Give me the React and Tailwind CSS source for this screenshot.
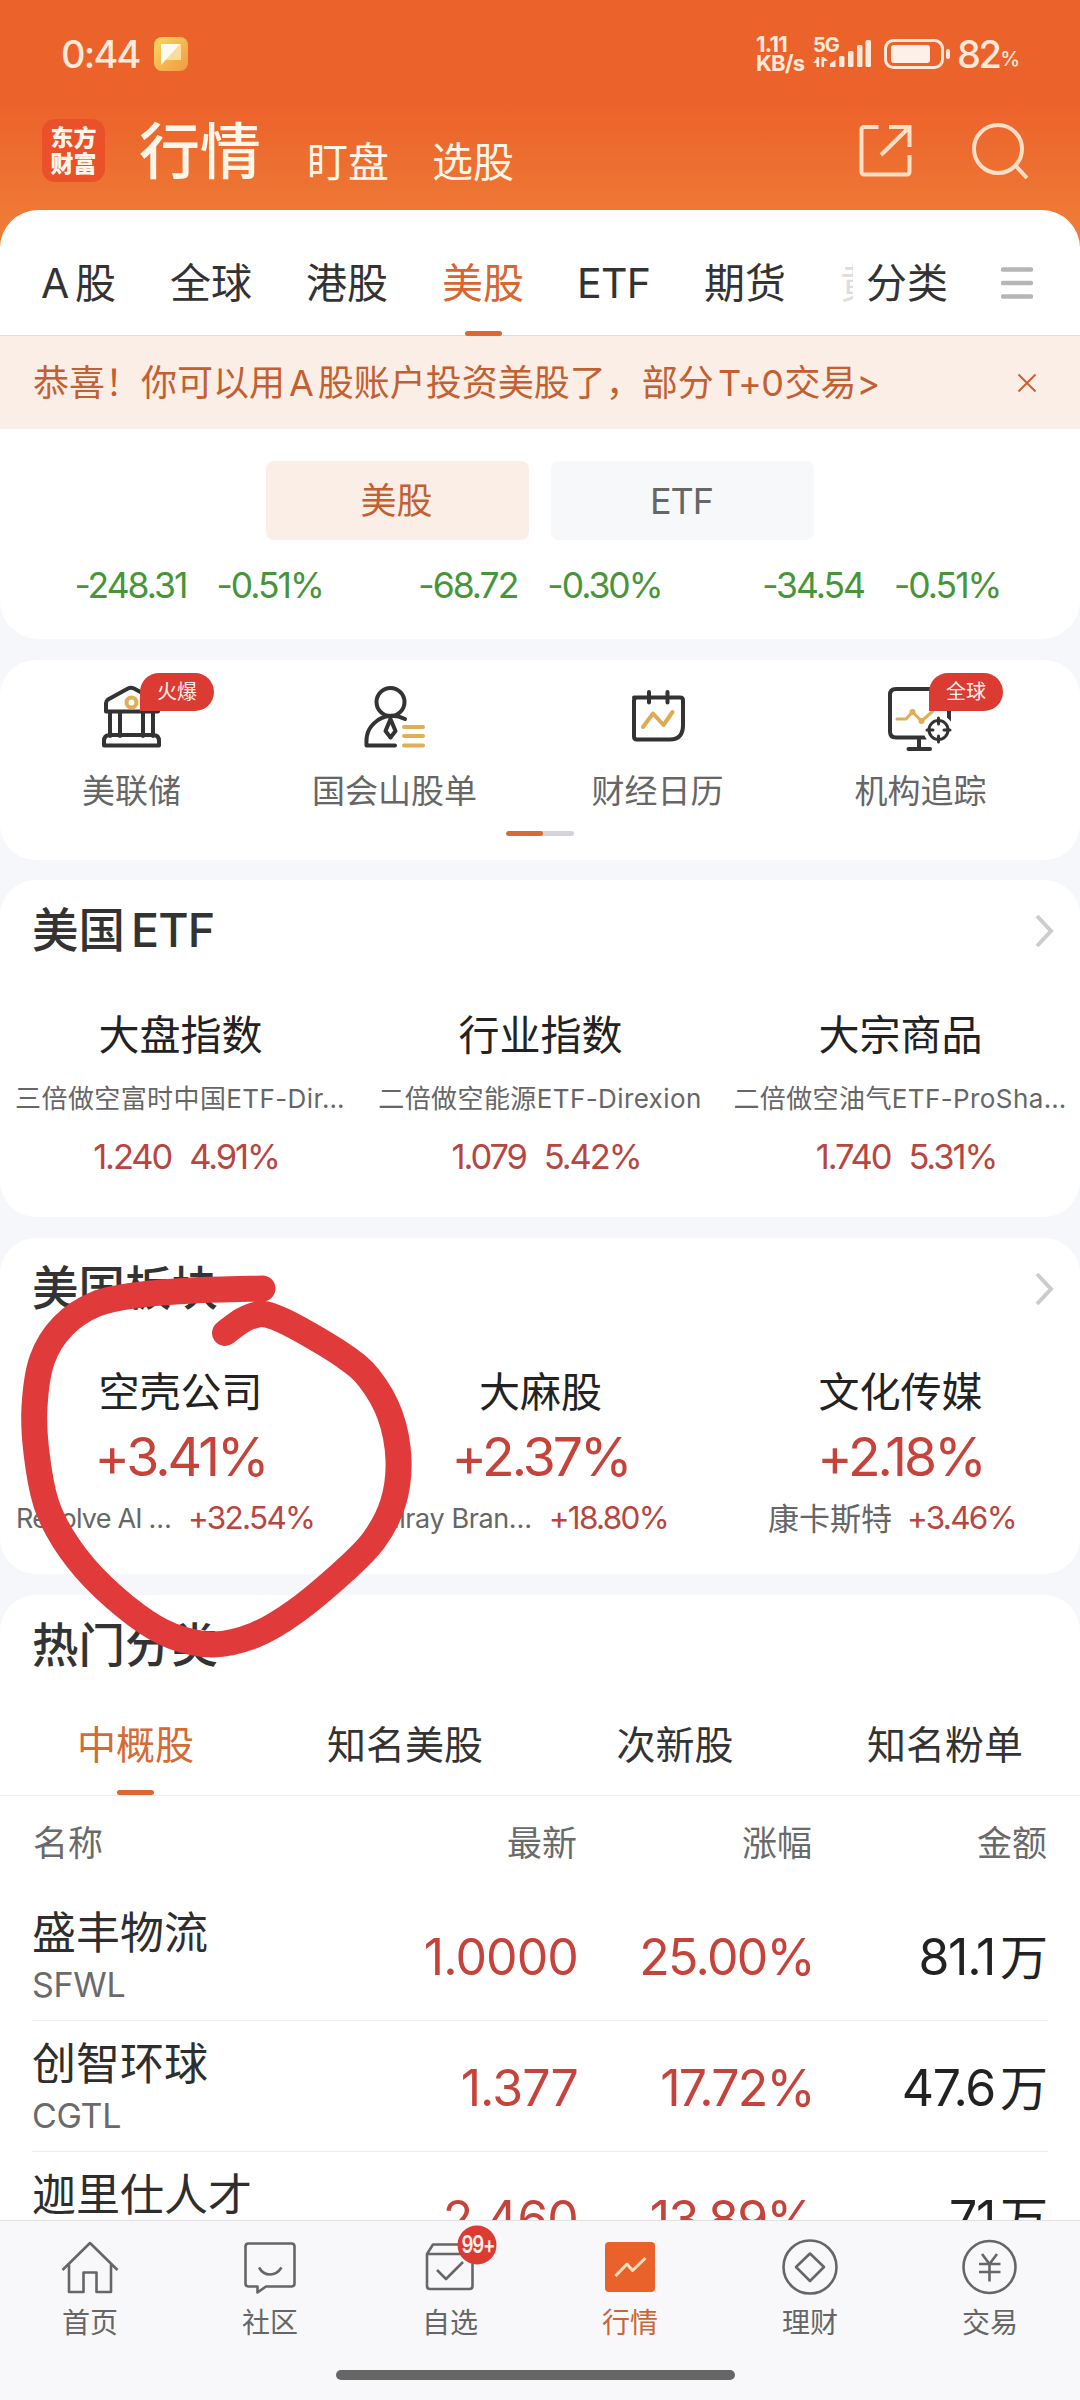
import React from "react";

const RED_MARK = [
  [262.5, 1288.5], [193, 1290.5], [138, 1295], [96, 1304], [63, 1326], [42, 1360], [34.5, 1407], [36.5, 1453],
  [46, 1503], [64, 1540], [93, 1577], [136, 1615], [172, 1636], [213, 1644.5], [255, 1635], [296, 1611],
  [344, 1571], [374, 1540], [393, 1503], [398.5, 1460], [390, 1415], [369, 1378], [344, 1356], [303, 1331],
  [277, 1318], [261, 1314], [243, 1320], [225, 1333],
];

// Catmull-Rom spline through the points, as cubic segments
function smooth(p) {
  let d = `M${p[0][0]} ${p[0][1]}`;
  for (let i = 0; i < p.length - 1; i++) {
    const a = p[i - 1] || p[i], b = p[i], c = p[i + 1], e = p[i + 2] || c;
    d += `C${b[0] + (c[0] - a[0]) / 6} ${b[1] + (c[1] - a[1]) / 6} ${c[0] - (e[0] - b[0]) / 6} ${c[1] - (e[1] - b[1]) / 6} ${c[0]} ${c[1]}`;
  }
  return d;
}

function StatusBar() {
  return (
    <div className="flex h-[108px] items-center pl-[61px] text-[#ffe9d9]">
      <div className="w-[93px] text-[38px] font-medium leading-none tracking-[-1.8px]">0:44</div>
      <svg width="34" height="34" viewBox="0 0 34 34">
        <defs>
          <linearGradient id="note" x1="0" y1="0" x2="1" y2="1">
            <stop offset="0" stopColor="#f8d860" />
            <stop offset="1" stopColor="#f09a42" />
          </linearGradient>
        </defs>
        <rect width="34" height="34" rx="8" fill="url(#note)" />
        <path d="M7 7H27V23H12Z" fill="#fbdc9c" />
        <path d="M7 7H26L7 28Z" fill="#fffaf0" />
      </svg>
      <div className="ml-[568px] w-[57px] text-[22px] font-bold leading-[19px] tracking-[-0.700px]">
        <div>1.11</div>
        <div>KB/s</div>
      </div>
      <div className="relative h-[34px] w-[58px]">
        <div className="absolute left-0 top-0 text-[20px] font-bold leading-[16px] tracking-[-1px]">5G</div>
        <svg className="absolute left-0 top-0" width="58" height="34" viewBox="0 0 58 34" fill="currentColor">
          <path d="M3.500 20h2.600v10H3.500zM0 26l3.500-4v4zM8.500 20h2.600v10H8.500zM11 20l4 4h-4z" />
          <path d="M17 30V26.500L22.500 23V30Z" />
          <rect x="26" y="19" width="5.500" height="11" rx="1.500" />
          <rect x="35" y="14" width="5.500" height="16" rx="1.500" />
          <rect x="44" y="8" width="5.500" height="22" rx="1.500" />
          <rect x="52.500" y="3" width="5.500" height="27" rx="1.500" />
        </svg>
      </div>
      <svg className="ml-[13px]" width="67" height="30" viewBox="0 0 67 30">
        <rect x="1.500" y="1.500" width="57" height="27" rx="8" fill="none" stroke="currentColor" strokeWidth="3" />
        <rect x="7" y="6" width="39" height="18" rx="3" fill="#fdf0e8" />
        <rect x="62" y="10" width="4" height="10" rx="2" fill="currentColor" />
      </svg>
      <div className="ml-[6px] text-[38px] font-medium leading-none tracking-[-2.500px]">82</div>
      <div className="ml-[1px] mt-[10px] text-[20px] font-medium leading-none">%</div>
    </div>
  );
}

function TitleBar() {
  return (
    <div className="flex h-[102px] pl-[42px] text-[#fff6ea]">
      <div className="mt-[11px] flex h-[63px] w-[63px] flex-col items-center justify-center rounded-[13px] bg-[#ea512a] text-[23px] font-black leading-[26px]">
        <div>东方</div>
        <div>财富</div>
      </div>
      <div className="ml-[34px] mt-[14px] text-[61px] font-medium leading-[60px]">行情</div>
      <div className="ml-[46px] mt-[33px] text-[41px] leading-[42px]">盯盘</div>
      <div className="ml-[43px] mt-[33px] text-[41px] leading-[42px]">选股</div>
      <svg className="ml-[345px] mt-[16px]" width="53" height="53" viewBox="0 0 53 53" fill="none" stroke="#fedfc6" strokeWidth="4">
        <path d="M19.500 3H5a2.500 2.500 0 0 0-2.500 2.500V48a2.500 2.500 0 0 0 2.500 2.500H48a2.500 2.500 0 0 0 2.500-2.500V31M30 3H50.500V23M50 3.500L22 31" />
      </svg>
      <svg className="ml-[60px] mt-[13px]" width="58" height="58" viewBox="0 0 58 58" fill="none" stroke="#fedfc6" strokeWidth="4">
        <circle cx="26" cy="28" r="24" />
        <path d="M43 44L55 57" />
      </svg>
    </div>
  );
}

function MarketTabs() {
  return (
    <div className="flex h-[126px] items-start border-b border-[#e0dedc] pl-[41px] pt-[52px] text-[41px] leading-[42px] text-[#333]">
      <div className="flex w-[75px] justify-between"><span>A</span><span>股</span></div>
      <div className="ml-[54px]">全球</div>
      <div className="ml-[54px]">港股</div>
      <div className="relative ml-[54px] text-[#d9662f]">
        美股
        <div className="absolute left-[23px] top-[69px] h-[5px] w-[37px] rounded-full bg-[#dd6631]" />
      </div>
      <div className="ml-[53px] w-[73px] tracking-[-0.700px]">ETF</div>
      <div className="ml-[54px]">期货</div>
      <div className="ml-[54px] w-[13px] overflow-hidden whitespace-nowrap text-[#ddd]">黄</div>
      <div className="ml-[13px]">分类</div>
      <svg className="ml-[53px] mt-[5px]" width="32" height="32" viewBox="0 0 32 32" stroke="#b6b6b6" strokeWidth="4.500" strokeLinecap="round">
        <path d="M2 2.500H30M2 16H30M2 29.500H30" />
      </svg>
    </div>
  );
}

function Index({ value, pct }) {
  return (
    <div className="flex justify-center gap-[30px] text-[35.500px] leading-[36px] tracking-[-2px] text-[#469539]">
      <span>{value}</span>
      <span>{pct}</span>
    </div>
  );
}

function Badge({ children }) {
  return (
    <div className="absolute left-[140px] top-[13px] flex h-[38px] w-[74px] items-center justify-center rounded-full rounded-bl-none bg-[#db3b32] text-[20px] text-[#fff0ec]">
      {children}
    </div>
  );
}

function Shortcut({ label, badge, children }) {
  return (
    <div className="relative h-[160px] w-[263px]">
      <svg className="h-[100px] w-[263px]" viewBox="0 0 263 100" fill="none" stroke="#333" strokeWidth="4" strokeLinecap="round" strokeLinejoin="round">
        {children}
      </svg>
      <div className="mt-[12px] text-center text-[33px] leading-[38px] text-[#666]">{label}</div>
      {badge && <Badge>{badge}</Badge>}
    </div>
  );
}

function CardTitle({ children, arrow }) {
  return (
    <div className="flex h-[101px] shrink-0 items-center justify-between pl-[32px] pr-[26px]">
      <h2 className="text-[46.500px] font-medium leading-none text-[#333]">{children}</h2>
      {arrow && (
        <svg width="19" height="34" viewBox="0 0 19 34" fill="none" stroke="#ccc" strokeWidth="4">
          <path d="M2 2L16 17L2 32" />
        </svg>
      )}
    </div>
  );
}

function Etf({ name, fund, price, pct }) {
  return (
    <div className="w-[360px] text-center">
      <div className="mt-[33px] pl-[1px] text-[41px] leading-[42px] text-[#222]">{name}</div>
      <div className="mt-[27px] whitespace-nowrap text-[26px] leading-[32px] tracking-[0.400px] text-[#666]">{fund}</div>
      <div className="ml-[12px] mt-[24px] flex justify-center gap-[18px] text-[34.500px] leading-[36px] tracking-[-2.100px] text-[#b9453f]">
        <span>{price}</span>
        <span>{pct}</span>
      </div>
    </div>
  );
}

function Sector({ name, pct, stock, stockPct, className }) {
  return (
    <div className="w-[360px]">
      <div className="mt-[33px] pl-[1px] text-center text-[41px] leading-[40px] text-[#222]">{name}</div>
      <div className="mt-[16px] pl-[1px] text-center text-[53.500px] leading-[58px] tracking-[-3px] text-[#c6433b]">{pct}</div>
      <div className={`mt-[12px] flex h-[40px] items-center whitespace-nowrap leading-none ${className}`}>
        <span className="text-[#666]">{stock}</span>
        <span className="text-[31.500px] tracking-[-1.700px] text-[#b9453f]">{stockPct}</span>
      </div>
    </div>
  );
}

function StockRow({ name, code, price, pct, amount }) {
  return (
    <div className="mx-[32px] flex h-[131px] shrink-0 items-start border-b border-[#eee]">
      <div className="w-[244px]">
        <div className="mt-[20px] text-[44px] leading-[46px] text-[#2e2e2e]">{name}</div>
        <div className="mt-[12px] text-[34px] leading-[34px] tracking-[-0.300px] text-[#6a6a6a]">{code}</div>
      </div>
      <div className="mt-[39px] w-[302px] text-right text-[50px] leading-[56px] tracking-[-0.900px] text-[#c6433b]">{price}</div>
      <div className="mt-[39px] w-[236px] text-right text-[50px] leading-[56px] tracking-[-1.700px] text-[#c6433b]">{pct}</div>
      <div className="mt-[39px] w-[234px] text-right text-[50px] leading-[56px] tracking-[-1.300px] text-[#222]">
        {amount}<span className="ml-[5px] text-[48px] tracking-normal">万</span>
      </div>
    </div>
  );
}

function NavItem({ label, active, children }) {
  return (
    <div className={`relative w-[180px] text-center ${active ? "text-[#cb6634]" : "text-[#666]"}`}>
      <svg className="h-[85px] w-[180px]" viewBox="0 0 180 85" fill="none" stroke="#666" strokeWidth="2.600" strokeLinejoin="round">
        {children}
      </svg>
      <div className="text-[28px] leading-[34px]">{label}</div>
    </div>
  );
}

export default function App() {
  return (
    <div className="relative flex h-[2400px] w-[1080px] flex-col overflow-hidden bg-[#f6f7fa] font-['Inter','Noto_Sans_CJK_SC',sans-serif]">
      <div className="h-[260px] shrink-0 bg-linear-to-b from-[#ec622b] from-40% to-[#ee7a35] to-85%">
        <StatusBar />
        <TitleBar />
      </div>

      <section className="relative -mt-[50px] h-[429px] shrink-0 rounded-[38px] bg-white">
        <MarketTabs />
        <div className="flex h-[93px] items-center bg-[#fbeee7] pl-[33px] text-[36px] leading-none text-[#c26031]">
          <span>恭喜！你可以用</span>
          <span className="mx-[4px]">A</span>
          <span>股账户投资美股了，部分</span>
          <span className="ml-[4px] tracking-[-0.500px]">T+0</span>
          <span className="ml-[1px]">交易&gt;</span>
          <svg className="ml-auto mr-[43px]" width="20" height="20" viewBox="0 0 20 20" stroke="#c8622f" strokeWidth="2">
            <path d="M1.500 1.500L18.500 18.500M18.500 1.500L1.500 18.500" />
          </svg>
        </div>
        <div className="mt-[32px] flex justify-center gap-[22px] text-[36px]">
          <div className="flex h-[79px] w-[263px] items-center justify-center rounded-[8px] bg-[#fbeee7] pr-[2px] leading-none text-[#c26031]">美股</div>
          <div className="flex h-[79px] w-[263px] items-center justify-center rounded-[8px] bg-[#f7f8fa] pr-[2px] leading-none tracking-[-1px] text-[#666]">ETF</div>
        </div>
        <div className="mt-[28px] grid grid-cols-3 px-[28px]">
          <Index value="-248.31" pct="-0.51%" />
          <Index value="-68.72" pct="-0.30%" />
          <Index value="-34.54" pct="-0.51%" />
        </div>
      </section>

      <section className="mt-[21px] h-[200px] shrink-0 rounded-[36px] bg-white">
        <div className="flex">
          <Shortcut label="美联储" badge="火爆">
            <path d="M106 61.500V53q0-2 2-3.500L128 38.500q3-1.500 6 0L156 50.500q2 1.500 2 3.500V61.500ZM110 63V86M120 63V86M143 63V86M153 63V86M104 95.500V91q0-6 6-6H153q6 0 6 6V95.500Z" transform="translate(0,-10)" />
            <circle cx="131.500" cy="42.500" r="5" stroke="#dfae57" />
          </Shortcut>
          <Shortcut label="国会山股单">
            <circle cx="127.500" cy="42" r="14" />
            <path d="M142 59Q128 52 115 60C104 68 103 76 103.500 85.500H132M127.500 59L132.500 71L127.500 77.500L122.500 71Z" />
            <path d="M141 67H160M141 76H160M141 85.500H160" stroke="#dfae57" />
          </Shortcut>
          <Shortcut label="财经日历">
            <path d="M108 37.500H154q3 0 3 3V65q0 14.500-13 14.500H111q-3 0-3-3V40.500q0-3 3-3M123 32V42.500M141.500 32V42.500" />
            <path d="M117 67L127 53.500L137.500 65L146.500 52" stroke="#e0aa52" />
          </Shortcut>
          <Shortcut label="机构追踪" badge="全球">
            <path d="M137 77.500H107q-6 0-6-6V35q0-6 6-6H154q6 0 6 6V61M130 78V89M119.500 89H141" />
            <path d="M108 59H117L123.500 52L132.500 61L144 51" stroke="#dfae57" strokeWidth="3" />
            <circle cx="123.500" cy="52" r="2" fill="#dfae57" stroke="#dfae57" strokeWidth="2" />
            <circle cx="132.500" cy="61" r="2" fill="#dfae57" stroke="#dfae57" strokeWidth="2" />
            <circle cx="149.500" cy="70" r="13" fill="white" stroke="white" />
            <circle cx="149.500" cy="70" r="9.500" strokeWidth="3" />
            <path d="M149.500 58V64M149.500 76V82M138 70H144M155 70H161" strokeWidth="3" />
          </Shortcut>
        </div>
        <div className="mx-auto mt-[11px] flex h-[5px] w-[68px] overflow-hidden rounded-full bg-[#d4d5d9]">
          <div className="w-[37px] rounded-full bg-[#d56a3a]" />
        </div>
      </section>

      <section className="mt-[20px] h-[337px] shrink-0 rounded-[36px] bg-white">
        <CardTitle arrow>美国<span className="ml-[6px] tracking-[-0.800px]">ETF</span></CardTitle>
        <div className="flex">
          <Etf name="大盘指数" fund="三倍做空富时中国ETF-Dir…" price="1.240" pct="4.91%" />
          <Etf name="行业指数" fund="二倍做空能源ETF-Direxion" price="1.079" pct="5.42%" />
          <Etf name="大宗商品" fund="二倍做空油气ETF-ProSha…" price="1.740" pct="5.31%" />
        </div>
      </section>

      <section className="mt-[21px] h-[336px] shrink-0 rounded-[36px] bg-white">
        <CardTitle arrow>美国板块</CardTitle>
        <div className="flex">
          <Sector name="空壳公司" pct="+3.41%" stock="Resolve AI …" stockPct="+32.54%" className="gap-[17px] pl-[16px] text-[27px] tracking-[-0.800px]" />
          <Sector name="大麻股" pct="+2.37%" stock="Tilray Bran…" stockPct="+18.80%" className="gap-[17px] pl-[16px] text-[27px] tracking-[-0.400px]" />
          <Sector name="文化传媒" pct="+2.18%" stock="康卡斯特" stockPct="+3.46%" className="gap-[15px] pl-[48px] text-[31px]" />
        </div>
      </section>

      <section className="mt-[21px] flex h-[625px] shrink-0 flex-col overflow-hidden rounded-t-[36px] bg-white">
        <CardTitle>热门分类</CardTitle>
        <div className="flex h-[100px] shrink-0 items-start border-b border-[#eee] pt-[29px] text-center text-[39px] leading-[40px] text-[#333]">
          <div className="relative w-[270px] pl-[1px] text-[#d56a34]">
            中概股
            <div className="absolute left-[117px] top-[65px] h-[5px] w-[37px] rounded-full bg-[#dd6631]" />
          </div>
          <div className="w-[270px]">知名美股</div>
          <div className="w-[270px]">次新股</div>
          <div className="w-[270px]">知名粉单</div>
        </div>
        <div className="flex h-[94px] shrink-0 items-center px-[33px] text-[35px] leading-none text-[#6a6a6a]">
          <div className="w-[243px]">名称</div>
          <div className="w-[301px] text-right">最新</div>
          <div className="w-[235px] text-right">涨幅</div>
          <div className="w-[235px] text-right">金额</div>
        </div>
        <StockRow name="盛丰物流" code="SFWL" price="1.0000" pct="25.00%" amount="81.1" />
        <StockRow name="创智环球" code="CGTL" price="1.377" pct="17.72%" amount="47.6" />
        <StockRow name="迦里仕人才" price="2.460" pct="13.89%" amount="71" />
      </section>

      <nav className="h-[180px] shrink-0 border-t border-[#e2e2e4] bg-[#f8f8fb]">
        <div className="flex">
          <NavItem label="首页">
            <path d="M62.500 49L90 22L117.500 49M69 43.500V71H83.500V51.500H96.500V71H111V43.500" />
          </NavItem>
          <NavItem label="社区">
            <path d="M68.500 22.500H111.500q3 0 3 3V62.500q0 3-3 3H86L77.500 71.500V65.500H68.500q-3 0-3-3V25.500q0-3 3-3ZM79 46.500Q83 53.500 90 53.500T101.500 46.500" />
          </NavItem>
          <NavItem label="自选">
            <path d="M67 33L73 23.500H107L112.500 33V65q0 3-3 3H70q-3 0-3-3ZM67 33H112M77 49L86 58L103 41" />
            <circle cx="117" cy="24" r="19.500" fill="#db3b32" stroke="none" />
            <text transform="translate(118 31.500) scale(0.78 1)" textAnchor="middle" fontSize="24" fontWeight="600" letterSpacing="-1.500" fill="#fff0ec" stroke="none">99+</text>
          </NavItem>
          <NavItem label="行情" active>
            <rect x="65" y="21" width="50" height="50" rx="4" fill="#ea622b" stroke="none" />
            <path d="M75.500 55L87 43L92.500 49.500L105.500 37" stroke="#fde0c0" strokeWidth="3" />
          </NavItem>
          <NavItem label="理财">
            <circle cx="90" cy="46" r="26.500" />
            <path d="M90 32.500L104 46L90 60L76 46Z" />
          </NavItem>
          <NavItem label="交易">
            <circle cx="89.500" cy="46" r="26" />
            <path d="M82 33L89.500 43L97 33M79 43H100.500M79 51H100.500M89.500 43V60.500" />
          </NavItem>
        </div>
        <div className="ml-[336px] mt-[30px] h-[10px] w-[399px] rounded-full bg-[#666]" />
      </nav>

      <svg className="pointer-events-none absolute left-0 top-0" width="1080" height="2400" viewBox="0 0 1080 2400">
        <path d={smooth(RED_MARK)} fill="none" stroke="#e03b3a" strokeWidth="26" strokeLinecap="round" />
      </svg>
    </div>
  );
}
